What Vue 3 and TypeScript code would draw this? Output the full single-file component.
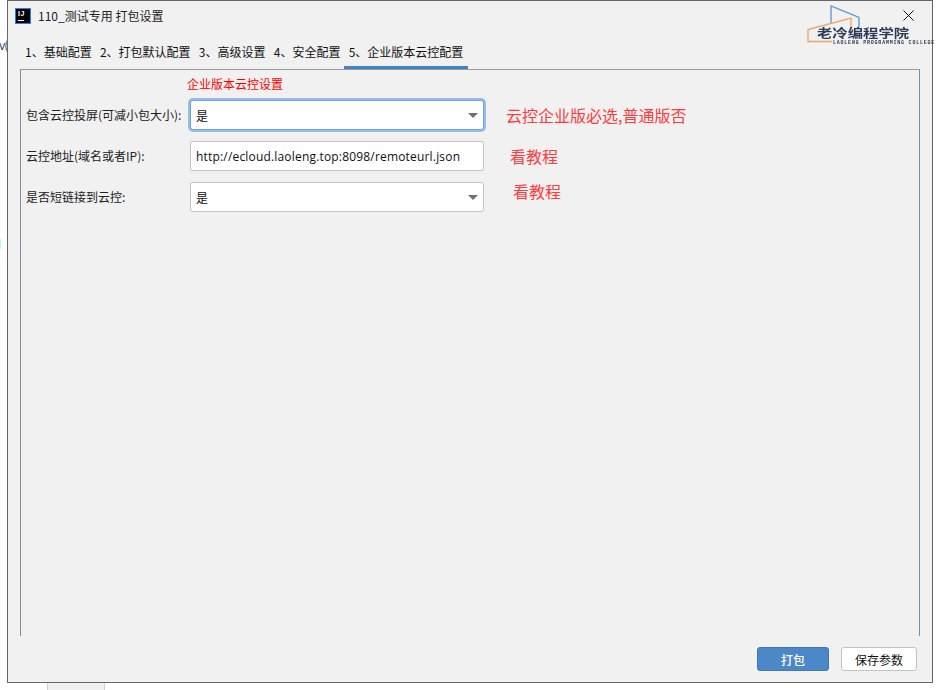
<script setup lang="ts">
const tabs: string[] = ['1、基础配置', '2、打包默认配置', '3、高级设置', '4、安全配置', '5、企业版本云控配置']
</script>

<template>
  <div class="page">
    <span class="stray-text">v(</span>
    <span class="stray-mark"></span>
    <div class="dialog">
      <header class="titlebar">
        <div class="app-icon"><span class="ij">IJ</span><span class="ij-bar"></span></div>
        <span class="title">110_测试专用 打包设置</span>
        <svg class="close" width="11" height="11" viewBox="0 0 11 11">
          <path d="M.5.5l10 10M10.5.5l-10 10" stroke="#111" stroke-width="1" fill="none" />
        </svg>
      </header>

      <nav class="tabs">
        <span v-for="(t, i) in tabs" :key="t" class="tab" :class="{ active: i === tabs.length - 1 }">{{ t }}</span>
      </nav>

      <main class="panel">
        <div class="heading">企业版本云控设置</div>
        <div class="form">
          <div class="row">
            <label class="label">包含云控投屏(可减小包大小):</label>
            <div class="field select focused"><span>是</span><i class="arrow"></i></div>
            <span class="note note-1">云控企业版必选,普通版否</span>
          </div>
          <div class="row">
            <label class="label">云控地址(域名或者IP):</label>
            <div class="field"><span class="url">http://ecloud.laoleng.top:8098/remoteurl.json</span></div>
            <span class="note note-2">看教程</span>
          </div>
          <div class="row">
            <label class="label">是否短链接到云控:</label>
            <div class="field select"><span>是</span><i class="arrow"></i></div>
            <span class="note note-3">看教程</span>
          </div>
        </div>
      </main>

      <footer class="footer">
        <button class="btn primary">打包</button>
        <button class="btn">保存参数</button>
      </footer>
    </div>
    <div class="logo">
      <svg class="logo-art" width="56" height="40" viewBox="0 0 56 40">
        <path d="M24 18V1L52 12.500V22" stroke="#5b95d3" stroke-width="1.3" fill="none" />
        <path d="M44 23V13L1 24.500V36.500H25" stroke="#eda566" stroke-width="1.3" fill="none" />
      </svg>
      <span class="logo-name">老冷编程学院</span>
      <span class="logo-sub">LAOLENG PROGRAMMING COLLEGE</span>
    </div>
    <div class="under"></div>
  </div>
</template>

<style>
html, body { margin: 0; background: #fff; }
</style>

<style scoped>
.page {
  position: relative;
  width: 940px;
  height: 690px;
  overflow: hidden;
  background: #fff;
  font-family: "Noto Sans CJK SC", "Liberation Sans", sans-serif;
  font-size: 12px;
  color: #111;
}
.stray-text {
  position: absolute;
  left: -1px;
  top: 36px;
  font-size: 12px;
  letter-spacing: -1px;
  color: #27476e;
  width: 8px;
  overflow: hidden;
}
.stray-mark {
  position: absolute;
  left: 0;
  top: 239px;
  width: 1px;
  height: 10px;
  background: #aefcfc;
}
.dialog {
  position: absolute;
  left: 7px;
  top: 0;
  width: 926px;
  height: 683px;
  box-sizing: border-box;
  border: 1px solid #666;
  background: #f1f1f1;
  display: flex;
  flex-direction: column;
}
.titlebar {
  height: 30px;
  display: flex;
  align-items: center;
  padding-left: 7px;
  flex: none;
  position: relative;
}
.app-icon {
  width: 16px;
  height: 16px;
  box-sizing: border-box;
  background: #000;
  border: 1px solid #1e84f0;
  position: relative;
  margin-right: 7px;
}
.ij {
  position: absolute;
  left: 2px;
  top: 2px;
  font: bold 7px/6px "Liberation Sans", sans-serif;
  letter-spacing: .5px;
  color: #fff;
}
.ij-bar {
  position: absolute;
  left: 2px;
  bottom: 2px;
  width: 6px;
  height: 1px;
  background: #fff;
}
.title { color: #222; line-height: 16px; }
.close { position: absolute; left: 895px; top: 9px; }
.logo {
  position: absolute;
  left: 807px;
  top: 5px;
  width: 128px;
  height: 42px;
}
.logo-art { position: absolute; left: 0; top: 0; }
.logo-name {
  position: absolute;
  left: 10px;
  top: 21px;
  font-size: 12px;
  line-height: 14px;
  font-weight: 700;
  color: #2c3a55;
  white-space: nowrap;
  transform-origin: left center;
  transform: scaleX(1.28);
  filter: blur(.45px);
}
.logo-sub {
  position: absolute;
  left: 26px;
  top: 35px;
  font: bold 5px/6px "Liberation Mono", monospace;
  letter-spacing: .78px;
  color: #2c3a55;
  white-space: nowrap;
  filter: blur(.2px);
}
.tabs {
  display: flex;
  height: 38px;
  flex: none;
  padding-left: 12px;
  align-items: stretch;
}
.tab {
  padding: 13px 5px 0;
  line-height: 16px;
  box-sizing: border-box;
  border-bottom: 3px solid transparent;
  white-space: nowrap;
  margin-right: -1.75px;
}
.tab.active { border-bottom-color: #4083c9; margin-right: 0; }
.panel {
  flex: none;
  height: 567px;
  margin: 0 12px 0 12px;
  box-sizing: border-box;
  border-top: 1px solid #9a9a9a;
  border-left: 1px solid #7d8da0;
  border-right: 1px solid #7d8da0;
  padding: 6px 0 0 5px;
}
.heading {
  margin-left: 161px;
  color: #f00;
  line-height: 16px;
}
.form {
  margin-top: 8px;
  display: flex;
  flex-direction: column;
  gap: 11px;
}
.row {
  display: flex;
  align-items: center;
  height: 30px;
}
.label {
  width: 164px;
  flex: none;
  line-height: 16px;
  color: #222;
}
.field {
  width: 294px;
  height: 30px;
  box-sizing: border-box;
  flex: none;
  background: #fff;
  border: 1px solid #c4c4c4;
  border-radius: 2px;
  padding-left: 5px;
  display: flex;
  align-items: center;
  position: relative;
  color: #111;
}
.url {
  font-family: "Open Sans", "Noto Sans", sans-serif;
  letter-spacing: .18px;
  white-space: nowrap;
}
.field.select { border-radius: 3px; }
.focused {
  border-color: #6fa6dc;
  box-shadow: 0 0 0 2px #93bdea;
}
.arrow {
  position: absolute;
  right: 5px;
  top: 12px;
  width: 0;
  height: 0;
  border-left: 5px solid transparent;
  border-right: 5px solid transparent;
  border-top: 5px solid #707070;
}
.note {
  color: #ff3c3c;
  font-size: 16px;
  line-height: 22px;
  white-space: nowrap;
}
.note-1 { margin-left: 22px; }
.note-2 { margin-left: 26px; }
.note-3 { margin-left: 29px; margin-top: -12px; }
.footer {
  flex: 1;
  display: flex;
  justify-content: flex-end;
  align-items: flex-start;
  gap: 12px;
  padding: 11px 15px 0 0;
}
.btn {
  height: 24px;
  width: 76px;
  box-sizing: border-box;
  background: #fff;
  border: 1px solid #c4c4c4;
  border-radius: 3px;
  font: inherit;
  padding: 0;
  color: #111;
}
.btn.primary {
  width: 72px;
  background: #4c87c8;
  border-color: #3f76b5;
  color: #fff;
  font-weight: 500;
}
.under {
  position: absolute;
  left: 47px;
  top: 683px;
  width: 58px;
  height: 7px;
  box-sizing: border-box;
  background: #f1f1f1;
  border-left: 1px solid #d0d0d0;
  border-right: 1px solid #d0d0d0;
}
</style>
